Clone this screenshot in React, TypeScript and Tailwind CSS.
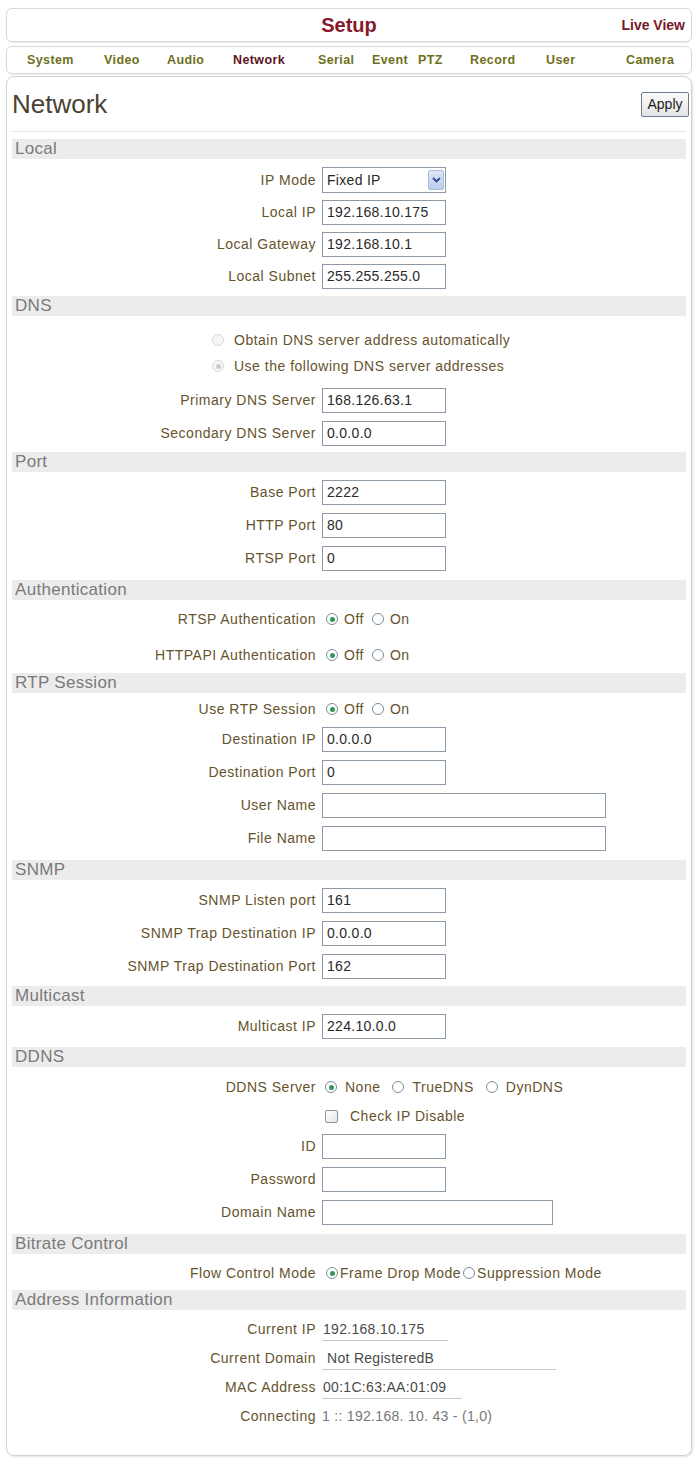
import React from "react";

const tabs = [
    { name: "System", w: "w-[77px]" },
    { name: "Video", w: "w-[63px]" },
    { name: "Audio", w: "w-[66px]" },
    { name: "Network", w: "w-[85px]", active: true },
    { name: "Serial", w: "w-[54px]" },
    { name: "Event", w: "w-[46px]" },
    { name: "PTZ", w: "w-[52px]" },
    { name: "Record", w: "w-[76px]" },
    { name: "User", w: "w-[80px]" },
    { name: "Camera", w: "" },
];

function Radio({ checked, disabled }: { checked?: boolean; disabled?: boolean }) {
    return (
        <span
            className={`inline-flex h-[12px] w-[12px] shrink-0 items-center justify-center rounded-full border ${
                disabled ? "border-[#d6dadd] bg-[#f6f6f6]" : "border-[#7d8d9a] bg-white"
            }`}
        >
            {checked && (
                <span className={`h-[5px] w-[5px] rounded-full ${disabled ? "bg-[#c9cdd1]" : "bg-[#2f9857]"}`} />
            )}
        </span>
    );
}

function Checkbox() {
    return (
        <span className="inline-block h-[13px] w-[13px] shrink-0 rounded-[2px] border border-[#8a96a2] bg-gradient-to-br from-white to-[#e6e6e6]" />
    );
}

function TextBox({ value = "", w = "w-[124px]" }: { value?: string; w?: string }) {
    return (
        <div
            className={`flex h-[25px] items-center border border-[#8d9aa6] bg-white pl-[4px] text-[14px] tracking-[0.3px] text-[#2a2a2a] ${w}`}
        >
            {value}
        </div>
    );
}

function Row({ label, h = "h-[33px]", children }: { label: string; h?: string; children: React.ReactNode }) {
    return (
        <div className={`flex items-center ${h}`}>
            <div className="w-[304px] shrink-0 text-right text-[14px] tracking-[0.5px] text-[#66532c]">{label}</div>
            <div className="ml-[6px] flex items-center">{children}</div>
        </div>
    );
}

function SectionBar({ title }: { title: string }) {
    return (
        <div className="h-[20px] bg-[#ececec] pl-[3px] text-[17px] leading-[20px] tracking-[0.3px] text-[#7a7a7a]">
            {title}
        </div>
    );
}

function Choice({ label, checked, gap = "ml-[6px]" }: { label: string; checked?: boolean; gap?: string }) {
    return (
        <span className="flex items-center">
            <Radio checked={checked} />
            <span className={`${gap} text-[14px] tracking-[0.5px] text-[#66532c]`}>{label}</span>
        </span>
    );
}

function InfoValue({ value, w, pad = "pl-[1px]" }: { value: string; w: string; pad?: string }) {
    return (
        <div
            className={`h-[22px] border-b border-[#c8c8c8] text-[14px] leading-[20px] tracking-[0.3px] text-[#4a4a4a] ${pad} ${w}`}
        >
            {value}
        </div>
    );
}

export default function App() {
    return (
        <div className="min-h-[1459px] bg-white px-[6px] pt-[8px] font-['Liberation_Sans',Arial,sans-serif]">
            {/* Title strip */}
            <div className="grid h-[34px] grid-cols-[1fr_auto_1fr] items-center rounded-[6px] border border-[#d9d9d9] shadow-[0_1px_1px_rgba(0,0,0,0.08)]">
                <span />
                <span className="text-[20px] font-bold text-[#861a2b]">Setup</span>
                <span className="justify-self-end pr-[6px] text-[14px] font-bold text-[#761828]">Live View</span>
            </div>

            {/* Menu tabs */}
            <div className="mt-[4px] flex h-[28px] items-center rounded-[6px] border border-[#d9d9d9] pl-[20px] shadow-[0_1px_1px_rgba(0,0,0,0.08)]">
                {tabs.map((t) => (
                    <span
                        key={t.name}
                        className={`${t.w} shrink-0 text-[12.5px] font-bold tracking-[0.4px] ${
                            t.active ? "text-[#5c1624]" : "text-[#6f6f1c]"
                        }`}
                    >
                        {t.name}
                    </span>
                ))}
            </div>

            {/* Settings panel */}
            <div className="mt-[2px] rounded-[8px] border border-[#d2d2d2] px-[5px] pb-[24px] shadow-[1px_1px_2px_rgba(0,0,0,0.12)]">
                <div className="flex h-[55px] items-center justify-between border-b border-[#e6e6e6]">
                    <span className="text-[26px] text-[#4b4232]">Network</span>
                    <button className="mr-[-3px] h-[25px] w-[48px] rounded-[2px] border border-[#6c7c8c] bg-gradient-to-b from-[#fbfbfb] to-[#e4e4e4] text-[14px] text-[#222222]">
                        Apply
                    </button>
                </div>

                <div className="mt-[7px]">
                    <SectionBar title="Local" />
                    <div className="pb-[4px] pt-[5px]">
                        <Row label="IP Mode" h="h-[32px]">
                            <div className="flex h-[26px] w-[124px] items-center justify-between border border-[#8d9aa6] bg-white pl-[4px] pr-[1px] text-[14px] tracking-[0.3px] text-[#2a2a2a]">
                                Fixed IP
                                <span className="flex h-[20px] w-[16px] items-center justify-center rounded-[2px] border border-[#a9bcdc] bg-gradient-to-b from-[#dde7f7] to-[#bccdeb]">
                                    <svg width="9" height="6" viewBox="0 0 9 6">
                                        <path d="M1 1l3.5 3.5L8 1" fill="none" stroke="#2f4d92" strokeWidth="1.8" />
                                    </svg>
                                </span>
                            </div>
                        </Row>
                        <Row label="Local IP" h="h-[32px]">
                            <TextBox value="192.168.10.175" />
                        </Row>
                        <Row label="Local Gateway" h="h-[32px]">
                            <TextBox value="192.168.10.1" />
                        </Row>
                        <Row label="Local Subnet" h="h-[32px]">
                            <TextBox value="255.255.255.0" />
                        </Row>
                    </div>

                    <SectionBar title="DNS" />
                    <div className="pb-[2px] pt-[11px]">
                        <div className="flex h-[26px] items-center pl-[200px]">
                            <Radio disabled />
                            <span className="ml-[10px] text-[14px] tracking-[0.5px] text-[#66532c]">
                                Obtain DNS server address automatically
                            </span>
                        </div>
                        <div className="flex h-[26px] items-center pl-[200px]">
                            <Radio checked disabled />
                            <span className="ml-[10px] text-[14px] tracking-[0.5px] text-[#66532c]">
                                Use the following DNS server addresses
                            </span>
                        </div>
                        <div className="mt-[5px]">
                            <Row label="Primary DNS Server">
                                <TextBox value="168.126.63.1" />
                            </Row>
                            <Row label="Secondary DNS Server">
                                <TextBox value="0.0.0.0" />
                            </Row>
                        </div>
                    </div>

                    <SectionBar title="Port" />
                    <div className="pb-[5px] pt-[4px]">
                        <Row label="Base Port">
                            <TextBox value="2222" />
                        </Row>
                        <Row label="HTTP Port">
                            <TextBox value="80" />
                        </Row>
                        <Row label="RTSP Port">
                            <TextBox value="0" />
                        </Row>
                    </div>

                    <SectionBar title="Authentication" />
                    <div className="pt-[1px]">
                        <Row label="RTSP Authentication" h="h-[36px]">
                            <div className="flex items-center gap-[8px] pl-[4px]">
                                <Choice label="Off" checked />
                                <Choice label="On" />
                            </div>
                        </Row>
                        <Row label="HTTPAPI Authentication" h="h-[36px]">
                            <div className="flex items-center gap-[8px] pl-[4px]">
                                <Choice label="Off" checked />
                                <Choice label="On" />
                            </div>
                        </Row>
                    </div>

                    <SectionBar title="RTP Session" />
                    <div className="pb-[5px] pt-[2px]">
                        <Row label="Use RTP Session" h="h-[28px]">
                            <div className="flex items-center gap-[8px] pl-[4px]">
                                <Choice label="Off" checked />
                                <Choice label="On" />
                            </div>
                        </Row>
                        <Row label="Destination IP">
                            <TextBox value="0.0.0.0" />
                        </Row>
                        <Row label="Destination Port">
                            <TextBox value="0" />
                        </Row>
                        <Row label="User Name">
                            <TextBox w="w-[284px]" />
                        </Row>
                        <Row label="File Name">
                            <TextBox w="w-[284px]" />
                        </Row>
                    </div>

                    <SectionBar title="SNMP" />
                    <div className="pb-[3px] pt-[4px]">
                        <Row label="SNMP Listen port">
                            <TextBox value="161" />
                        </Row>
                        <Row label="SNMP Trap Destination IP">
                            <TextBox value="0.0.0.0" />
                        </Row>
                        <Row label="SNMP Trap Destination Port">
                            <TextBox value="162" />
                        </Row>
                    </div>

                    <SectionBar title="Multicast" />
                    <div className="py-[4px]">
                        <Row label="Multicast IP">
                            <TextBox value="224.10.0.0" />
                        </Row>
                    </div>

                    <SectionBar title="DDNS" />
                    <div className="py-[5px]">
                        <Row label="DDNS Server" h="h-[30px]">
                            <div className="flex items-center gap-[12px] pl-[3px]">
                                <Choice label="None" checked gap="ml-[8px]" />
                                <Choice label="TrueDNS" gap="ml-[8px]" />
                                <Choice label="DynDNS" gap="ml-[8px]" />
                            </div>
                        </Row>
                        <Row label="" h="h-[28px]">
                            <div className="flex items-center pl-[3px]">
                                <Checkbox />
                                <span className="ml-[12px] text-[14px] tracking-[0.5px] text-[#66532c]">Check IP Disable</span>
                            </div>
                        </Row>
                        <Row label="ID">
                            <TextBox />
                        </Row>
                        <Row label="Password">
                            <TextBox />
                        </Row>
                        <Row label="Domain Name">
                            <TextBox w="w-[231px]" />
                        </Row>
                    </div>

                    <SectionBar title="Bitrate Control" />
                    <div className="pb-[2px] pt-[4px]">
                        <Row label="Flow Control Mode" h="h-[30px]">
                            <div className="flex items-center gap-[2px] pl-[4px]">
                                <Choice label="Frame Drop Mode" checked gap="ml-[2px]" />
                                <Choice label="Suppression Mode" gap="ml-[2px]" />
                            </div>
                        </Row>
                    </div>

                    <SectionBar title="Address Information" />
                    <div className="pt-[5px]">
                        <Row label="Current IP" h="h-[29px]">
                            <InfoValue value="192.168.10.175" w="w-[126px]" />
                        </Row>
                        <Row label="Current Domain" h="h-[29px]">
                            <InfoValue value="Not RegisteredB" w="w-[234px]" pad="pl-[5px]" />
                        </Row>
                        <Row label="MAC Address" h="h-[29px]">
                            <InfoValue value="00:1C:63:AA:01:09" w="w-[140px]" />
                        </Row>
                        <Row label="Connecting" h="h-[29px]">
                            <span className="text-[14px] tracking-[0.3px] text-[#777777]">1 :: 192.168. 10. 43 - (1,0)</span>
                        </Row>
                    </div>
                </div>
            </div>
        </div>
    );
}
